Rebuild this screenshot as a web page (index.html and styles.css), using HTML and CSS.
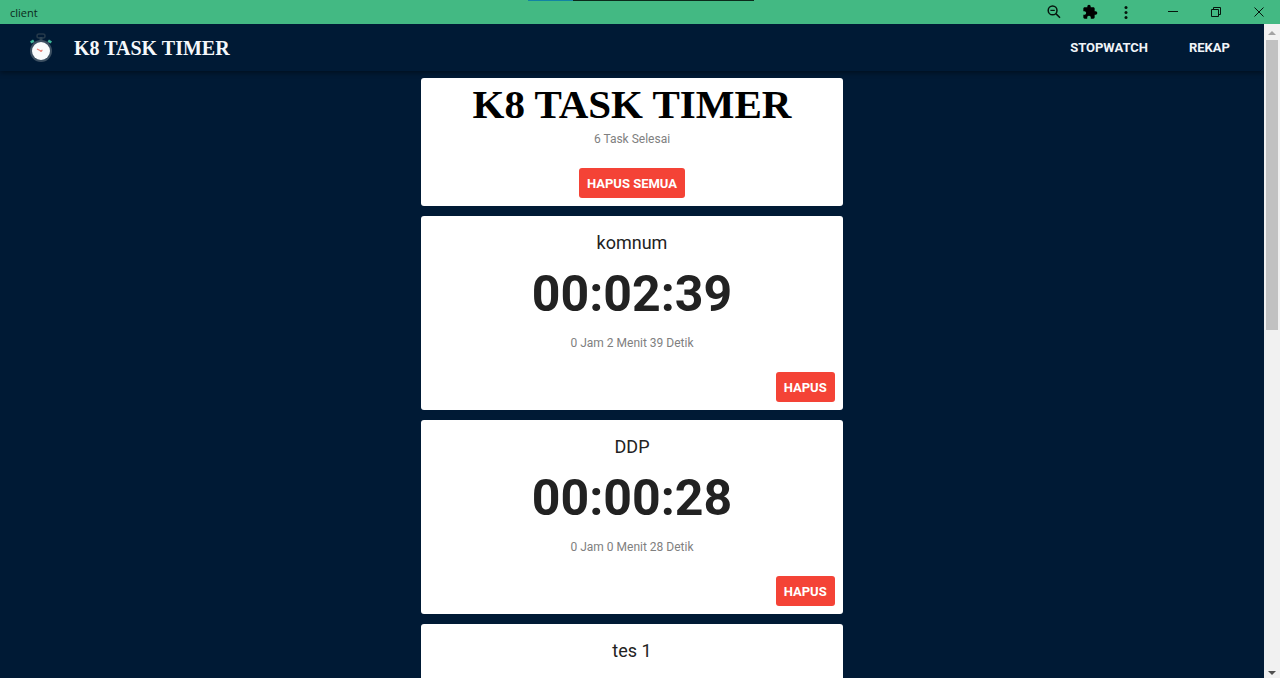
FILE: index.html
```html
<!DOCTYPE html>
<html lang="id">
<head>
<meta charset="utf-8">
<meta name="viewport" content="width=device-width, initial-scale=1">
<title>client</title>
<link rel="stylesheet" href="styles.css">
</head>
<body>
<header class="titlebar">
  <span class="titlebar-name">client</span>
  <div class="titlebar-progress"></div>
  <div class="titlebar-tools">
    <button class="tool" aria-label="Zoom"><svg width="16" height="16" viewBox="0 0 16 16"><g fill="none" stroke="#06150d" stroke-width="1.5"><circle cx="6.6" cy="6.4" r="4.4"/><path d="M9.8 9.6 14 13.8"/><path d="M4.4 6.4h4.4" stroke-width="1.2"/></g></svg></button>
    <button class="tool" aria-label="Extensions"><svg width="16" height="16" viewBox="0 0 24 24"><path fill="#000" d="M20.500 11H19V7c0-1.100-.9-2-2-2h-4V3.500a2.500 2.500 0 0 0-5 0V5H4c-1.100 0-2 .9-2 2v3.800h1.500c1.500 0 2.700 1.200 2.700 2.700S5 16.200 3.500 16.200H2V20c0 1.100.9 2 2 2h3.800v-1.500c0-1.500 1.200-2.700 2.700-2.700s2.700 1.200 2.700 2.700V22H17c1.100 0 2-.9 2-2v-4h1.500a2.500 2.500 0 0 0 0-5z"/></svg></button>
    <button class="tool" aria-label="Menu"><svg width="16" height="16" viewBox="0 0 16 16"><g fill="#06150d"><circle cx="8" cy="3.500" r="1.500"/><circle cx="8" cy="8.500" r="1.500"/><circle cx="8" cy="13.500" r="1.500"/></g></svg></button>
  </div>
  <div class="titlebar-window">
    <button class="window-button" aria-label="Minimize"><svg width="12" height="12" viewBox="0 0 12 12"><path d="M1 5.500h10" stroke="#06150d"/></svg></button>
    <button class="window-button" aria-label="Restore"><svg width="12" height="12" viewBox="0 0 12 12"><path d="M1.500 3.500h7v7h-7zM3.500 3.500v-2h7v7h-2" fill="none" stroke="#06150d"/></svg></button>
    <button class="window-button" aria-label="Close"><svg width="12" height="12" viewBox="0 0 12 12"><path d="m1.500 1.500 9 9m0-9-9 9" stroke="#06150d"/></svg></button>
  </div>
</header>
<div class="viewport">
  <div class="page">
    <nav class="appbar">
      <svg class="logo" width="24" height="30" viewBox="0 0 24 30"><rect x="8" y="1" width="8" height="4" rx="2" fill="none" stroke="#25394a" stroke-width="1.500"/><path d="M12 4v5" stroke="#2d4253" stroke-width="3"/><path d="m4 9 3 3m13-3-3 3" stroke="#33495a" stroke-width="1.500"/><path d="M1 8.500 4 6.500l1.500 2-3 2zM23 8.500l-3-2-1.500 2 3 2z" fill="#3fb79a"/><circle cx="12" cy="18" r="11" fill="#3c5062"/><circle cx="12" cy="18" r="9" fill="#f8fafb"/><path d="m8 16 5 2.500m-2 0 2.500-1.500" stroke="#e78278" stroke-width="1.300"/></svg>
      <span class="brand">K8 TASK TIMER</span>
      <div class="links">
        <a class="link" href="#stopwatch">STOPWATCH</a>
        <a class="link" href="#rekap">REKAP</a>
      </div>
    </nav>
    <main class="column">
      <section class="card summary">
        <h1 class="headline">K8 TASK TIMER</h1>
        <p class="caption">6 Task Selesai</p>
        <button class="delete">HAPUS SEMUA</button>
      </section>
      <article class="card task">
        <h2 class="name">komnum</h2>
        <div class="time">00:02:39</div>
        <p class="caption">0 Jam 2 Menit 39 Detik</p>
        <button class="delete">HAPUS</button>
      </article>
      <article class="card task">
        <h2 class="name">DDP</h2>
        <div class="time">00:00:28</div>
        <p class="caption">0 Jam 0 Menit 28 Detik</p>
        <button class="delete">HAPUS</button>
      </article>
      <article class="card task">
        <h2 class="name">tes 1</h2>
      </article>
    </main>
  </div>
  <div class="scrollbar">
    <svg width="8" height="16" viewBox="0 0 8 16"><path d="M0 11 4 7l4 4z" fill="#a3a3a3"/></svg>
    <div class="thumb"></div>
    <svg class="arrow-down" width="8" height="10" viewBox="0 0 8 10"><path d="m0 3 4 4 4-4z" fill="#505050"/></svg>
  </div>
</div>
</body>
</html>
```
FILE: styles.css
```css
* {
  box-sizing: border-box;
}

body {
  margin: 0;
  height: 100vh;
  display: flex;
  flex-direction: column;
  overflow: hidden;
  background: #001a35;
  font-family: Roboto, "Liberation Sans", sans-serif;
}

h1, h2, p {
  margin: 0;
}

button {
  border: 0;
  padding: 0;
  background: none;
  font-family: inherit;
}

.titlebar {
  position: relative;
  flex: none;
  height: 24px;
  display: flex;
  align-items: center;
  padding-left: 10px;
  background: #43b983;
}

.titlebar-name {
  flex: 1;
  padding-top: 2px;
  font: 11px/16px "Open Sans", sans-serif;
  color: #0b2a1b;
}

.titlebar-progress {
  position: absolute;
  top: 0;
  left: 50%;
  width: 226px;
  height: 1px;
  margin-left: -112px;
  background: linear-gradient(90deg, #1283a4 20%, #0b2a1b 20%);
}

.titlebar-tools,
.titlebar-window {
  display: flex;
  align-items: center;
}

.tool {
  width: 36px;
  height: 24px;
  display: grid;
  place-items: center;
}

.window-button {
  width: 43px;
  height: 24px;
  display: grid;
  place-items: center;
}

.titlebar-window {
  padding-left: 7px;
}

.viewport {
  flex: 1;
  min-height: 0;
  display: flex;
}

.page {
  flex: 1;
  overflow: hidden;
}

.appbar {
  position: relative;
  height: 47px;
  display: flex;
  align-items: center;
  padding: 0 34px 0 29px;
  background: #001a35;
  box-shadow: 0 2px 5px rgba(0, 0, 0, 0.4);
}

.brand {
  margin-left: 21px;
  font: bold 20px/24px "Liberation Serif", serif;
  color: #f5f8fb;
}

.links {
  margin-left: auto;
  display: flex;
  gap: 41px;
}

.link {
  font-size: 13px;
  line-height: 20px;
  font-weight: 700;
  color: #f0f4f8;
  text-decoration: none;
}

.column {
  width: 33.3333%;
  margin: 0 auto;
  padding-top: 7px;
  display: flex;
  flex-direction: column;
  gap: 10px;
}

.card {
  display: flex;
  flex-direction: column;
  align-items: center;
  padding: 8px;
  border-radius: 3px;
  background: #fff;
}

.headline {
  font: bold 41px/36px "Liberation Serif", serif;
  color: #000;
}

.caption {
  font-size: 12px;
  line-height: 20px;
  color: #808080;
}

.summary .caption {
  margin: 7px 0 19px;
}

.task {
  min-height: 194px;
}

.name {
  margin-top: 7px;
  font-size: 18px;
  line-height: 24px;
  font-weight: 400;
  color: #222;
}

.time {
  margin: 10px 0;
  font-size: 50px;
  line-height: 58px;
  font-weight: 700;
  color: #222;
}

.delete {
  height: 30px;
  padding: 0 8px;
  border-radius: 3px;
  background: #f44336;
  font-size: 13px;
  font-weight: 700;
  color: #fff;
}

.task .delete {
  margin-top: auto;
  align-self: flex-end;
}

.scrollbar {
  width: 16px;
  display: flex;
  flex-direction: column;
  align-items: center;
  background: #f1f1f1;
}

.thumb {
  width: 12px;
  height: 290px;
  background: #c1c1c1;
}

.arrow-down {
  margin-top: auto;
}
```
